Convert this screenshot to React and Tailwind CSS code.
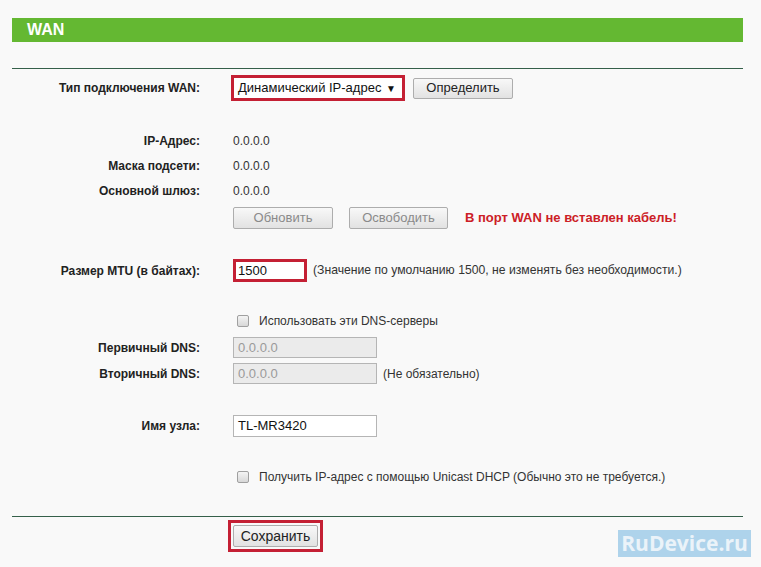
import React from "react";

const font = { fontFamily: '"Liberation Sans", Arial, sans-serif' };

function Label({ children }) {
  return (
    <div className="w-[200px] shrink-0 text-right text-[12px] font-bold text-[#222]">
      {children}
    </div>
  );
}

function Btn({ children, disabled, className = "" }) {
  return (
    <div
      className={
        "flex items-center justify-center border border-[#adadad] rounded-[2px] bg-gradient-to-b from-[#f8f8f8] to-[#e2e2e2] text-[13px] " +
        (disabled ? "text-[#8a8a8a] " : "text-[#222] ") +
        className
      }
    >
      {children}
    </div>
  );
}

function Check() {
  return (
    <div className="w-[12px] h-[12px] rounded-[2px] border border-[#a0a0a0] bg-gradient-to-b from-[#f4f4f4] to-[#d8d8d8]" />
  );
}

export default function App() {
  return (
    <div style={font} className="relative w-[761px] h-[567px] overflow-hidden bg-[#f9f9f9] text-[#333]">
      <div className="pt-[18px] px-[12px] w-[743px] box-content pr-0">
        <div className="h-[24px] w-[731px] bg-[#64b832] flex items-center pl-[15px] text-white font-bold text-[16px]">
          WAN
        </div>
        <div className="mt-[26px] h-[1px] w-[731px] bg-[#35604a]" />
      </div>

      <div className="flex flex-col">
        <div className="mt-[6px] h-[26px] flex items-center">
          <Label>Тип подключения WAN:</Label>
          <div className="ml-[31px] h-[26px] w-[174px] border-[3px] border-[#c42034] bg-white flex items-center pl-[4px] pr-[6px] justify-between text-[13px] text-[#111]">
            <span>Динамический IP-адрес</span>
            <span className="text-[10px]">▼</span>
          </div>
          <Btn className="ml-[8px] w-[100px] h-[21px]">Определить</Btn>
        </div>

        <div className="mt-[27px] h-[25px] flex items-center">
          <Label>IP-Адрес:</Label>
          <div className="ml-[33px] text-[12px] text-[#333]">0.0.0.0</div>
        </div>
        <div className="h-[25px] flex items-center">
          <Label>Маска подсети:</Label>
          <div className="ml-[33px] text-[12px] text-[#333]">0.0.0.0</div>
        </div>
        <div className="h-[25px] flex items-center">
          <Label>Основной шлюз:</Label>
          <div className="ml-[33px] text-[12px] text-[#333]">0.0.0.0</div>
        </div>

        <div className="mt-[4px] h-[22px] flex items-center">
          <div className="w-[233px] shrink-0" />
          <Btn disabled className="w-[100px] h-[22px]">Обновить</Btn>
          <Btn disabled className="ml-[16px] w-[99px] h-[22px]">Освободить</Btn>
          <div className="ml-[17px] text-[13px] font-bold text-[#cc2026]">В порт WAN не вставлен кабель!</div>
        </div>

        <div className="mt-[30px] h-[23px] flex items-center">
          <Label>Размер MTU (в байтах):</Label>
          <div className="ml-[33px] h-[23px] w-[74px] border-[3px] border-[#c42034] bg-white flex items-center pl-[2px] text-[13px] text-[#111]">
            1500
          </div>
          <div className="ml-[6px] text-[12.2px] text-[#333]">
            (Значение по умолчанию 1500, не изменять без необходимости.)
          </div>
        </div>

        <div className="mt-[29px] h-[20px] flex items-center">
          <div className="w-[237px] shrink-0" />
          <Check />
          <div className="ml-[10px] text-[12px] text-[#333]">Использовать эти DNS-серверы</div>
        </div>
        <div className="mt-[6px] h-[21px] flex items-center">
          <Label>Первичный DNS:</Label>
          <div className="ml-[33px] h-[21px] w-[144px] border border-[#b5b5b5] bg-[#ebebeb] flex items-center pl-[4px] text-[13px] text-[#9a9a9a]">
            0.0.0.0
          </div>
        </div>
        <div className="mt-[5px] h-[21px] flex items-center">
          <Label>Вторичный DNS:</Label>
          <div className="ml-[33px] h-[21px] w-[144px] border border-[#b5b5b5] bg-[#ebebeb] flex items-center pl-[4px] text-[13px] text-[#9a9a9a]">
            0.0.0.0
          </div>
          <div className="ml-[6px] text-[12px] text-[#333]">(Не обязательно)</div>
        </div>

        <div className="mt-[31px] h-[22px] flex items-center">
          <Label>Имя узла:</Label>
          <div className="ml-[33px] h-[22px] w-[144px] border border-[#b5b5b5] bg-white flex items-center pl-[4px] text-[13px] text-[#111]">
            TL-MR3420
          </div>
        </div>

        <div className="mt-[30px] h-[20px] flex items-center">
          <div className="w-[237px] shrink-0" />
          <Check />
          <div className="ml-[10px] text-[12px] text-[#333]">
            Получить IP-адрес с помощью Unicast DHCP (Обычно это не требуется.)
          </div>
        </div>

        <div className="mt-[29px] ml-[12px] h-[1px] w-[731px] bg-[#35604a]" />

        <div className="mt-[3px] ml-[228px] w-[95px] h-[32px] border-[3px] border-[#c42034] flex items-center justify-center">
          <Btn className="w-[85px] h-[22px] !text-[14px]">Сохранить</Btn>
        </div>
      </div>

      <div className="absolute left-[618px] top-[530px] w-[133px] h-[27px] bg-[#a6cfea] flex items-center justify-center text-[21px] font-bold text-[#eaf3f9] opacity-90" style={{ fontFamily: '"Open Sans", "DejaVu Sans", sans-serif' }}>
        RuDevice.ru
      </div>
    </div>
  );
}
